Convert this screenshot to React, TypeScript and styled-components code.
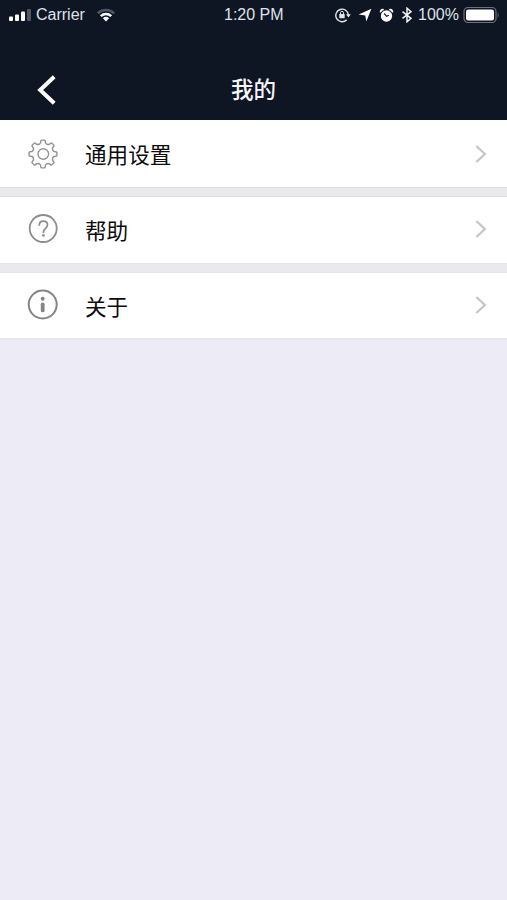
import React from 'react';
import styled, { createGlobalStyle } from 'styled-components';

const GlobalStyle = createGlobalStyle`
  * { box-sizing: border-box; }
  body { margin: 0; background: #edebf5; }
`;

const Screen = styled.div`
  width: 507px;
  height: 900px;
  overflow: hidden;
  background: #edebf5;
  display: flex;
  flex-direction: column;
  font-family: "Liberation Sans", "Noto Sans CJK SC", sans-serif;
`;

const TopArea = styled.header`
  height: 120px;
  flex: none;
  background: #0e1523;
  color: #fff;
`;

const StatusBar = styled.div`
  height: 30px;
  display: grid;
  grid-template-columns: 1fr auto 1fr;
  align-items: center;
  padding: 0 7px 0 8px;
  font-size: 16px;
  line-height: 30px;
  color: #dfe2ea;
`;

const StatusGroup = styled.div<{ $end?: boolean }>`
  display: flex;
  align-items: center;
  height: 30px;
  justify-content: ${(p) => (p.$end ? 'flex-end' : 'flex-start')};
  svg { flex: none; display: block; }
`;

const StatusIcons = styled.div`
  display: flex;
  align-items: center;
  gap: 7px;
`;

const StatusText = styled.span<{ $width: number; $left?: number; $right?: number }>`
  width: ${(p) => p.$width}px;
  margin-left: ${(p) => p.$left ?? 0}px;
  margin-right: ${(p) => p.$right ?? 0}px;
  white-space: nowrap;
`;

const NavBar = styled.div`
  height: 90px;
  display: grid;
  grid-template-columns: 80px 1fr 80px;
  align-items: center;
  padding-top: 29px;
`;

const BackButton = styled.button`
  border: 0;
  padding: 0 0 0 36px;
  background: none;
  height: 61px;
  display: flex;
  align-items: center;
`;

const Title = styled.h1`
  margin: 0;
  padding-bottom: 3px;
  text-align: center;
  font: 500 22.5px/32px "Noto Sans CJK SC", sans-serif;
  color: #f4f6fb;
`;

const Menu = styled.main`
  display: flex;
  flex-direction: column;
`;

const Row = styled.div<{ $height: number; $lift: number }>`
  height: ${(p) => p.$height}px;
  display: grid;
  grid-template-columns: 32px 1fr 14px;
  column-gap: 26px;
  align-items: center;
  padding: 0 19px ${(p) => p.$lift}px 27px;
  background: #fff;
  svg { display: block; }
`;

const Separator = styled.div<{ $height: number; $edge: string }>`
  height: ${(p) => p.$height}px;
  background: #eae9ee;
  border-top: 1px solid ${(p) => p.$edge};
  border-bottom: 1px solid ${(p) => p.$edge};
`;

const Label = styled.span<{ $drop: number }>`
  font: 400 21.6px/30px "Noto Sans CJK SC", sans-serif;
  color: #0c0c0c;
  padding-top: ${(p) => p.$drop}px;
`;

const SignalIcon = () => (
  <svg width="24" height="16" viewBox="0 0 24 16">
    <g fill="#fff">
      <rect x="1" y="9.5" width="4" height="4.5" rx="1" />
      <rect x="7" y="7.5" width="4" height="6.5" rx="1" />
      <rect x="13" y="4.5" width="4" height="9.5" rx="1" />
      <rect x="19" y="2" width="4" height="12" rx="1" opacity=".28" />
    </g>
  </svg>
);

const WifiIcon = () => (
  <svg width="20" height="16" viewBox="0 0 20 16" fill="none" strokeWidth="2.5">
    <path d="M1.8 6.4a11.7 11.7 0 0 1 16.4 0" stroke="#4f5562" />
    <path d="M4.8 9.2a7.4 7.4 0 0 1 10.4 0" stroke="#fff" />
    <path d="M10 14.4 6.9 11.3a4.5 4.5 0 0 1 6.2 0z" fill="#fff" />
  </svg>
);

const RotationLockIcon = () => (
  <svg width="16" height="16" viewBox="0 0 16 16" fill="none" stroke="#e3e5ea">
    <path d="M11.7 12.8a6.3 6.3 0 1 1 1.7-4.8" strokeWidth="1.4" />
    <path d="M11 7.2h4.8l-2.4 3.2z" fill="#e3e5ea" stroke="none" />
    <rect x="4.3" y="7" width="5.4" height="4.2" rx=".5" fill="#e3e5ea" stroke="none" />
    <path d="M5.5 7.2V5.8a1.5 1.5 0 0 1 3 0v1.4" strokeWidth="1" />
  </svg>
);

const LocationIcon = () => (
  <svg width="14" height="14" viewBox="0 0 14 14">
    <path d="M13.4.8 8.3 13.6 7.3 7.4.6 6.6z" fill="#fff" />
  </svg>
);

const AlarmIcon = () => (
  <svg width="15" height="15" viewBox="0 0 15 15">
    <circle cx="7.5" cy="8" r="5.7" fill="#fff" />
    <path d="M1.8 4.4a2 2 0 0 1 2.8-2.5M13.2 4.4a2 2 0 0 0-2.8-2.5" fill="none" stroke="#fff" strokeWidth="1.9" />
    <path d="M5.2 5.5 7.6 8.3 9.8 7.3" fill="none" stroke="#0e1523" strokeWidth="1.2" />
  </svg>
);

const BluetoothIcon = () => (
  <svg width="12" height="16" viewBox="0 0 12 16">
    <path d="m1.5 4.6 8.5 6.7-4 3.5V1.2l4 3.5-8.5 6.7" fill="none" stroke="#f1f2f5" strokeWidth="1.5" />
  </svg>
);

const BatteryIcon = () => (
  <svg width="37" height="18" viewBox="0 0 37 18">
    <rect x="1" y="1.5" width="32" height="15" rx="4" fill="none" stroke="#6b707b" strokeWidth="1.2" />
    <rect x="3" y="3.5" width="28" height="11" rx="2.2" fill="#fff" />
    <path d="M34.6 6.2q2 2.8 0 5.6z" fill="#6b707b" />
  </svg>
);

const BackIcon = () => (
  <svg width="22" height="32" viewBox="0 0 22 32">
    <path d="M18.2 2.8 4.2 16l14 13.2" fill="none" stroke="#fff" strokeWidth="4" />
  </svg>
);

const ChevronIcon = () => (
  <svg width="14" height="20" viewBox="0 0 14 20">
    <path d="m2.3 2 8.6 8-8.6 8" fill="none" stroke="#c5c5c7" strokeWidth="2.2" />
  </svg>
);

const TEETH = [0, 45, 90, 135, 180, 225, 270, 315];

/* Each tooth is a rounded crown joined to the next one by a shallow valley. */
const gearPath = () => {
  const at = (radius: number, degrees: number) => {
    const a = (degrees * Math.PI) / 180;
    return `${(16 + radius * Math.sin(a)).toFixed(2)} ${(16 - radius * Math.cos(a)).toFixed(2)}`;
  };
  const parts = TEETH.map((t, i) =>
    [
      `${i === 0 ? 'M' : 'L'}${at(13, t - 10)}`,
      `Q${at(14, t - 9)} ${at(14, t - 6)}`,
      `L${at(14, t + 6)}`,
      `Q${at(14, t + 9)} ${at(13, t + 10)}`,
      `L${at(11.5, t + 12)}`,
      `Q${at(9.6, t + 22.5)} ${at(11.5, t + 33)}`,
    ].join(' '),
  );
  return `${parts.join(' ')}Z`;
};

const GearIcon = () => (
  <svg width="32" height="32" viewBox="0 0 32 32" fill="none" stroke="#929292" strokeWidth="1.4" strokeLinejoin="round">
    <path d={gearPath()} />
    <circle cx="16.3" cy="16" r="5.3" />
  </svg>
);

const HelpIcon = () => (
  <svg width="32" height="32" viewBox="0 0 32 32" fill="none" stroke="#8d8d8d">
    <circle cx="16.2" cy="15.5" r="13.5" strokeWidth="1.8" />
    <path d="M12.2 12.7c0-2.8 1.6-4.5 4.2-4.5 2.4 0 4.1 1.5 4.1 3.8 0 3.3-4.1 3.4-4.1 7.2v.7" strokeWidth="1.7" />
    <circle cx="16.4" cy="22.4" r="1.3" fill="#8d8d8d" stroke="none" />
  </svg>
);

const InfoIcon = () => (
  <svg width="32" height="32" viewBox="0 0 32 32" fill="none" stroke="#858585">
    <circle cx="15.7" cy="15.5" r="14" strokeWidth="2" />
    <circle cx="15.7" cy="9.7" r="2" fill="#858585" stroke="none" />
    <path d="M15.7 15.3v6.1" strokeWidth="3.8" strokeLinecap="round" />
  </svg>
);

const items = [
  { label: '通用设置', Icon: GearIcon, height: 67, lift: 0, drop: 0, gap: 10, edge: '#dedde2' },
  { label: '帮助', Icon: HelpIcon, height: 66, lift: 2, drop: 2, gap: 10, edge: '#e7e6eb' },
  { label: '关于', Icon: InfoIcon, height: 65, lift: 1, drop: 2, gap: 2, edge: '#e8e7ec' },
];

export default function App() {
  return (
    <>
      <GlobalStyle />
      <Screen>
        <TopArea>
          <StatusBar>
            <StatusGroup>
              <SignalIcon />
              <StatusText $width={50} $left={4} $right={10}>Carrier</StatusText>
              <WifiIcon />
            </StatusGroup>
            <StatusText $width={60}>1:20 PM</StatusText>
            <StatusGroup $end>
              <StatusIcons>
                <RotationLockIcon />
                <LocationIcon />
                <AlarmIcon />
                <BluetoothIcon />
              </StatusIcons>
              <StatusText $width={41} $left={5} $right={4}>100%</StatusText>
              <BatteryIcon />
            </StatusGroup>
          </StatusBar>
          <NavBar>
            <BackButton aria-label="返回"><BackIcon /></BackButton>
            <Title>我的</Title>
          </NavBar>
        </TopArea>
        <Menu>
          {items.map(({ label, Icon, height, lift, drop, gap, edge }) => (
            <React.Fragment key={label}>
              <Row $height={height} $lift={lift}>
                <Icon />
                <Label $drop={drop}>{label}</Label>
                <ChevronIcon />
              </Row>
              <Separator $height={gap} $edge={edge} />
            </React.Fragment>
          ))}
        </Menu>
      </Screen>
    </>
  );
}
